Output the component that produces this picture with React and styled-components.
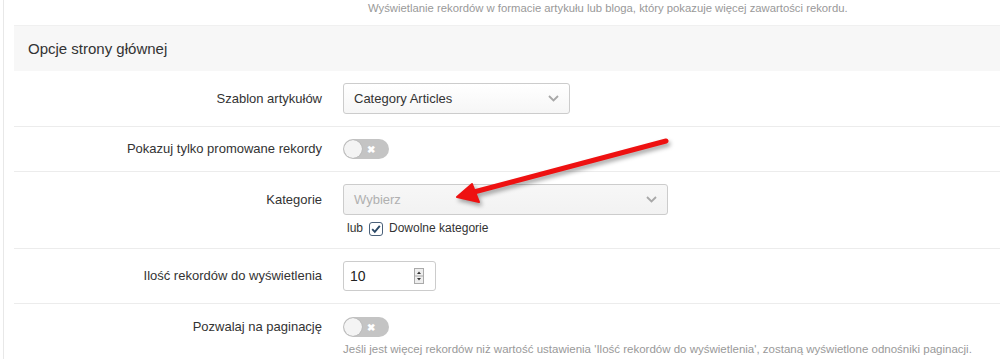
import styled, { createGlobalStyle } from 'styled-components';

const GlobalStyle = createGlobalStyle`
  html, body {
    margin: 0;
    padding: 0;
    background: #fff;
  }
  body {
    font-family: 'Liberation Sans', Arial, sans-serif;
    color: #333;
    font-size: 13px;
  }
`;

const Page = styled.div`
  position: relative;
  width: 1000px;
  height: 359px;
  overflow: hidden;
  padding-left: 3px;
  box-sizing: border-box;
`;

const Panel = styled.div`
  border-left: 1px solid #e8e8e8;
  padding-left: 10px;
  min-height: 359px;
`;

const TopNote = styled.div`
  height: 25px;
  padding-left: 354px;
  font-size: 11.3px;
  line-height: 16px;
  color: #999;
  white-space: nowrap;
`;

const SectionHead = styled.div`
  height: 46px;
  display: flex;
  align-items: center;
  padding-left: 14px;
  background: #f7f7f7;
  border-top: 1px solid #f0f0f0;
  box-sizing: border-box;
  font-size: 15px;
  color: #333;
`;

const Row = styled.div`
  display: grid;
  grid-template-columns: 308px 1fr;
  column-gap: 21px;
  padding: ${p => p.$pt || 12}px 0 ${p => p.$pb || 12}px;
  border-bottom: ${p => (p.$last ? 'none' : '1px solid #ececec')};
`;

const Label = styled.div`
  text-align: right;
  line-height: ${p => p.$lh}px;
  color: #333;
`;

const Controls = styled.div`
  display: flex;
  flex-direction: column;
  align-items: flex-start;
`;

const Select = styled.div`
  display: flex;
  align-items: center;
  justify-content: space-between;
  box-sizing: border-box;
  width: ${p => p.$w}px;
  height: 31px;
  padding: 0 10px 0 10px;
  border: 1px solid #ccc;
  border-radius: 3px;
  background: ${p => (p.$muted ? 'linear-gradient(#f7f7f7, #f2f2f2)' : 'linear-gradient(#fff, #f6f6f6)')};
  color: ${p => (p.$muted ? '#b0b0b0' : '#333')};
`;

const Chevron = () => (
  <svg width="11" height="7" viewBox="0 0 11 7">
    <path d="M1 1 L5.5 5.5 L10 1" fill="none" stroke="#a8a8a8" strokeWidth="1.8" />
  </svg>
);

const Toggle = styled.div`
  position: relative;
  width: 46px;
  height: 20px;
  border-radius: 10px;
  background: #c4c4c4;
  display: flex;
  align-items: center;
  justify-content: flex-end;
  padding-right: 14px;
  box-sizing: border-box;
  color: #fff;
  font-size: 10px;
  font-weight: bold;
`;

const Knob = styled.span`
  position: absolute;
  left: 1px;
  top: 1px;
  width: 18px;
  height: 18px;
  border-radius: 50%;
  background: #f4f4f4;
  box-shadow: 0 0 1px rgba(0, 0, 0, 0.3);
`;

const SubLine = styled.div`
  display: flex;
  align-items: center;
  gap: 6px;
  margin-top: 5px;
  padding-left: 4px;
  line-height: 17px;
  font-size: 12px;
  color: #333;
`;

const CheckBox = () => (
  <svg width="14" height="14" viewBox="0 0 14 14">
    <rect x="0.5" y="0.5" width="13" height="13" rx="2.5" fill="#fff" stroke="#4a6079" />
    <path d="M3.2 7.2 L5.8 9.8 L10.8 3.8" fill="none" stroke="#2b4866" strokeWidth="1.9" />
  </svg>
);

const NumberBox = styled.div`
  display: flex;
  align-items: center;
  justify-content: space-between;
  box-sizing: border-box;
  width: 93px;
  height: 30px;
  padding: 0 11px 0 6px;
  border: 1px solid #ccc;
  border-radius: 3px;
  background: #fff;
  font-size: 14px;
  color: #222;
`;

const Spinner = () => (
  <svg width="10" height="16" viewBox="0 0 10 16">
    <rect x="0.5" y="0.5" width="9" height="15" fill="#eee" stroke="#aaa" />
    <line x1="0.5" y1="8" x2="9.5" y2="8" stroke="#aaa" />
    <path d="M3 6 L5 3.5 L7 6 Z" fill="#333" />
    <path d="M3 10 L5 12.5 L7 10 Z" fill="#333" />
  </svg>
);

const Hint = styled.div`
  margin-top: 5px;
  font-size: 11.5px;
  line-height: 14px;
  color: #999;
  white-space: nowrap;
`;

const Arrow = styled.svg`
  position: absolute;
  left: 0;
  top: 0;
  pointer-events: none;
  filter: drop-shadow(2px 3px 2px rgba(0, 0, 0, 0.35));
`;

const SwitchOff = () => (
  <Toggle>
    <Knob />
    ✖
  </Toggle>
);

export default function App() {
  return (
    <>
      <GlobalStyle />
      <Page>
        <Panel>
          <TopNote>Wyświetlanie rekordów w formacie artykułu lub bloga, który pokazuje więcej zawartości rekordu.</TopNote>
          <SectionHead>Opcje strony głównej</SectionHead>

          <Row>
            <Label $lh={31}>Szablon artykułów</Label>
            <Controls>
              <Select $w={227}>
                Category Articles
                <Chevron />
              </Select>
            </Controls>
          </Row>

          <Row>
            <Label $lh={20}>Pokazuj tylko promowane rekordy</Label>
            <Controls>
              <SwitchOff />
            </Controls>
          </Row>

          <Row $pb={11}>
            <Label $lh={31}>Kategorie</Label>
            <Controls>
              <Select $w={325} $muted>
                Wybierz
                <Chevron />
              </Select>
              <SubLine>
                lub
                <CheckBox />
                Dowolne kategorie
              </SubLine>
            </Controls>
          </Row>

          <Row>
            <Label $lh={30}>Ilość rekordów do wyświetlenia</Label>
            <Controls>
              <NumberBox>
                10
                <Spinner />
              </NumberBox>
            </Controls>
          </Row>

          <Row $pt={13} $last>
            <Label $lh={20}>Pozwalaj na paginację</Label>
            <Controls>
              <SwitchOff />
              <Hint>
                Jeśli jest więcej rekordów niż wartość ustawienia 'Ilość rekordów do wyświetlenia', zostaną wyświetlone odnośniki paginacji.
              </Hint>
            </Controls>
          </Row>
        </Panel>

        <Arrow width="1000" height="359" viewBox="0 0 1000 359">
          <line x1="666" y1="141" x2="474" y2="192" stroke="#ee1111" strokeWidth="5" strokeLinecap="round" />
          <path d="M457 197 L472 184 L479 202 Z" fill="#ee1111" stroke="#ee1111" strokeWidth="2" strokeLinejoin="round" />
        </Arrow>
      </Page>
    </>
  );
}
